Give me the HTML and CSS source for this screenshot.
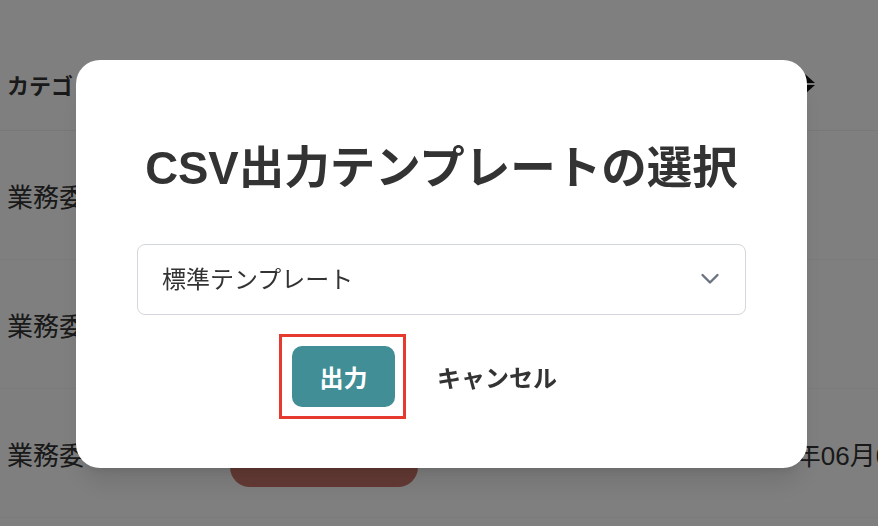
FILE: index.html
```html
<!doctype html>
<html lang="ja">
<head>
  <meta charset="UTF-8">
  <meta name="viewport" content="width=device-width, initial-scale=1.0">
  <title>CSV出力</title>
  <link rel="stylesheet" href="styles.css">
</head>
<body>
  <main class="page">
    <div class="list">
      <div class="list-row list-head">
        <div class="cell">カテゴリ</div>
        <div class="cell"></div>
        <div class="cell"></div>
        <div class="cell sort-cell">
          <span>日付</span>
          <svg class="sort-icon" width="20" height="20" viewBox="0 0 20 20">
            <polygon points="0,9 10,0 20,9" fill="#111"/>
            <polygon points="0,11 20,11 10,20" fill="#111"/>
          </svg>
        </div>
      </div>
      <div class="list-row">
        <div class="cell">業務委</div>
        <div class="cell"><span class="danger-btn">削除</span></div>
        <div class="cell"></div>
        <div class="cell"></div>
      </div>
      <div class="list-row">
        <div class="cell">業務委</div>
        <div class="cell"><span class="danger-btn">削除</span></div>
        <div class="cell"></div>
        <div class="cell"></div>
      </div>
      <div class="list-row">
        <div class="cell">業務委</div>
        <div class="cell"><span class="danger-btn">削除</span></div>
        <div class="cell"></div>
        <div class="cell">2024年06月01日</div>
      </div>
    </div>
  </main>

  <div class="overlay">
    <div class="modal">
      <h2 class="modal-title">CSV出力テンプレートの選択</h2>
      <div class="select-wrap">
        <select class="template-select">
          <option>標準テンプレート</option>
        </select>
        <svg class="select-arrow" width="20" height="12" viewBox="0 0 20 12" fill="none">
          <path d="M2.5 2l7.5 7.5 7.5-7.5" stroke="#6b7280" stroke-width="2.4" stroke-linecap="round" stroke-linejoin="round"/>
        </svg>
      </div>
      <div class="modal-actions">
        <div class="highlight">
          <button class="btn-primary">出力</button>
        </div>
        <button class="btn-cancel">キャンセル</button>
      </div>
    </div>
  </div>
</body>
</html>
```

FILE: styles.css
```css
* {
    margin: 0;
    padding: 0;
    box-sizing: border-box;
    font-family: "Liberation Sans", "Noto Sans CJK JP", sans-serif;
}

body {
    background-color: #fff;
    color: #333;
    overflow: hidden;
    height: 100vh;
}

.page {
    padding-top: 37px;
}

/* background list (dimmed by the overlay) */
.list-row {
    display: grid;
    grid-template-columns: 230px 188px 319px 1fr;
    height: 129px;
    align-items: center;
    font-size: 26px;
    white-space: nowrap;
    border-bottom: 1px solid #f6f6f6;
}

.list-head {
    height: 94px;
    font-size: 22px;
    font-weight: bold;
    border-bottom: 1px solid #f0f0f0;
}

.cell:first-child {
    padding-left: 7px;
    overflow: hidden;
}

.sort-cell {
    display: flex;
    align-items: center;
    gap: 14px;
}

.danger-btn {
    display: flex;
    height: 65px;
    align-items: center;
    justify-content: center;
    background-color: #c8746a;
    color: #fff;
    border-radius: 20px;
    font-weight: bold;
    font-size: 20px;
    transform: translateY(1px);
}

/* modal */
.overlay {
    position: fixed;
    inset: 0;
    background-color: rgba(0, 0, 0, 0.5);
    display: flex;
    align-items: center;
    justify-content: center;
    padding: 2px 0 0 5px;
}

.modal {
    width: 731px;
    height: 408px;
    background-color: #fff;
    border-radius: 24px;
    padding: 82px 61px 61px;
    box-shadow: 0 20px 25px -5px rgba(0, 0, 0, 0.1), 0 8px 10px -6px rgba(0, 0, 0, 0.1);
}

.modal-title {
    font-size: 45.5px;
    line-height: 54px;
    font-weight: bold;
    text-align: center;
    color: #333;
    white-space: nowrap;
}

.select-wrap {
    position: relative;
    margin-top: 48px;
}

.template-select {
    appearance: none;
    width: 100%;
    height: 71px;
    border: 1px solid #d3d6dc;
    border-radius: 8px;
    background-color: #fff;
    padding: 0 24px;
    font-size: 24px;
    color: #333;
}

.select-arrow {
    position: absolute;
    right: 26px;
    top: 29px;
    pointer-events: none;
}

.modal-actions {
    display: flex;
    justify-content: center;
    gap: 8px;
    margin-top: 31px;
}

.highlight {
    position: relative;
    display: flex;
}

.highlight::after {
    content: "";
    position: absolute;
    top: -12px;
    bottom: -12px;
    left: -13px;
    right: -11px;
    border: 3px solid #e53a2d;
}

.btn-primary {
    height: 61px;
    padding: 0 27.5px;
    border: none;
    border-radius: 10px;
    background-color: #418e96;
    color: #fff;
    font-size: 24px;
    font-weight: bold;
    cursor: pointer;
}

.btn-cancel {
    height: 61px;
    padding: 0 34px;
    border: none;
    background: none;
    color: #333;
    font-size: 24px;
    font-weight: bold;
    cursor: pointer;
}
```
